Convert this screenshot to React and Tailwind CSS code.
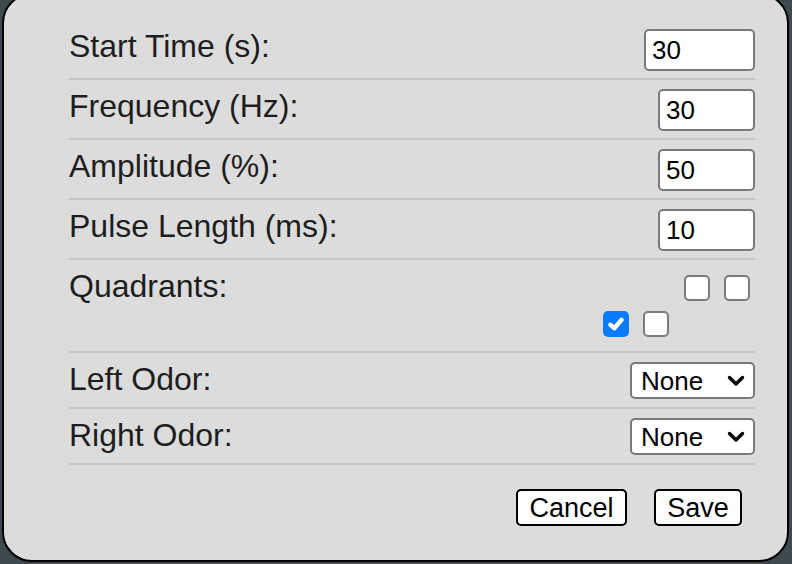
import React from "react";

const font = { fontFamily: '"Liberation Sans", Arial, sans-serif' };

function Row({ label, children, className = "" }) {
  return (
    <div className={"flex justify-between items-start border-b-2 border-[#c6c6c6] " + className}>
      <div className="text-[32px] leading-[36px] text-[#1e1e1e] mt-[-1px]">{label}</div>
      {children}
    </div>
  );
}

function NumInput({ value, w }) {
  return (
    <div className={"h-[42px] bg-white border-2 border-[#7a7a7a] rounded-[5px] text-[26px] leading-[38px] text-black pl-[6px] " + w}>
      {value}
    </div>
  );
}

function Box({ checked }) {
  if (checked) {
    return (
      <div className="w-[26px] h-[26px] rounded-[5px] bg-[#0b7bff] flex items-center justify-center">
        <svg width="18" height="18" viewBox="0 0 18 18">
          <path d="M3.4 9.8 L7.3 13.2 L14.6 4.8" fill="none" stroke="white" strokeWidth="4.4" strokeLinecap="round" strokeLinejoin="round" />
        </svg>
      </div>
    );
  }
  return <div className="w-[26px] h-[26px] rounded-[5px] bg-white border-2 border-[#7a7a7a]" />;
}

function Select() {
  return (
    <div className="w-[125px] h-[37px] bg-white border-2 border-[#7a7a7a] rounded-[5px] flex items-center justify-between pl-[9px] pr-[8px]">
      <span className="text-[26px] leading-[32px] text-black">None</span>
      <svg width="18" height="12" viewBox="0 0 18 12">
        <path d="M2.5 2.5 L9 9 L15.5 2.5" fill="none" stroke="black" strokeWidth="3.4" strokeLinecap="round" strokeLinejoin="round" />
      </svg>
    </div>
  );
}

export default function App() {
  return (
    <div className="w-[792px] h-[564px] bg-[#3e4a4d] overflow-hidden" style={font}>
      <div className="mt-[-7px] ml-[2px] w-[787px] h-[569px] bg-[#dcdcdc] border-2 border-black rounded-[30px] pt-[24px] pl-[65px] pr-[32px]">
        <Row label="Start Time (s):" className="pt-[10px] pb-[7px]">
          <NumInput value="30" w="w-[111px]" />
        </Row>
        <Row label="Frequency (Hz):" className="pt-[9px] pb-[7px]">
          <NumInput value="30" w="w-[97px]" />
        </Row>
        <Row label="Amplitude (%):" className="pt-[9px] pb-[7px]">
          <NumInput value="50" w="w-[97px]" />
        </Row>
        <Row label="Pulse Length (ms):" className="pt-[9px] pb-[7px]">
          <NumInput value="10" w="w-[97px]" />
        </Row>
        <div className="flex justify-between items-start border-b-2 border-[#c6c6c6] pt-[9px] pb-[14px]">
          <div className="text-[32px] leading-[36px] text-[#1e1e1e] mt-[-1px]">Quadrants:</div>
          <div className="flex flex-col items-end gap-[10px] pt-[6px]">
            <div className="flex gap-[14px] pr-[5px]">
              <Box />
              <Box />
            </div>
            <div className="flex gap-[14px] pr-[86px]">
              <Box checked />
              <Box />
            </div>
          </div>
        </div>
        <Row label="Left Odor:" className="pt-[9px] pb-[8px]">
          <Select />
        </Row>
        <Row label="Right Odor:" className="pt-[9px] pb-[8px]">
          <Select />
        </Row>
        <div className="flex justify-end gap-[27px] pt-[24px] pr-[13px]">
          <button className="h-[37px] w-[111px] bg-white border-2 border-black rounded-[5px] text-[27px] leading-[32px] text-black">Cancel</button>
          <button className="h-[37px] w-[88px] bg-white border-2 border-black rounded-[5px] text-[27px] leading-[32px] text-black">Save</button>
        </div>
      </div>
    </div>
  );
}
